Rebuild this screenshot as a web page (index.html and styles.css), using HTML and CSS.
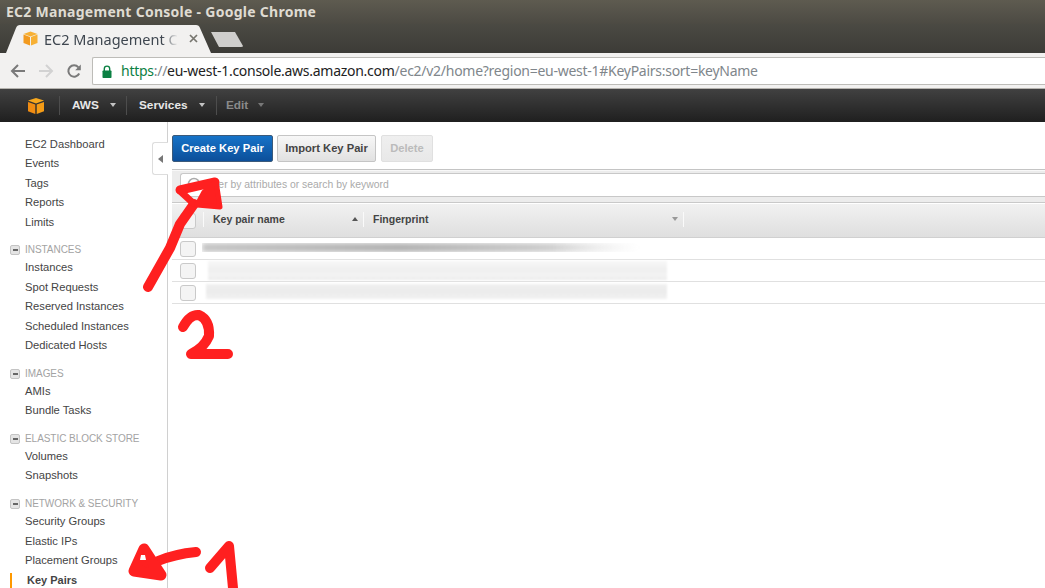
FILE: index.html
```html
<!DOCTYPE html>
<html lang="en">
<head>
<meta charset="utf-8">
<title>EC2 Management Console - Google Chrome</title>
<link rel="stylesheet" href="styles.css">
</head>
<body>
<div class="page">
  <header class="titlebar">EC2 Management Console - Google Chrome</header>
  <div class="tabstrip">
    <svg class="tabshape" width="250" height="29" viewBox="0 0 250 29"><path d="M6 29 L16 4 Q17 1 20 1 L196 1 Q199 1 200 4 L211 29 Z" fill="#f2f1f0"/><path d="M211 8 L235 8 L243 22 Q243 23 241 23 L219 23 Z" fill="#cfcecc"/></svg>
    <svg class="favicon" width="15" height="15" viewBox="0 0 15 15"><path d="M7.5 0.5 L14.5 3 L7.5 5.5 L0.5 3 Z" fill="#f7b034"/><path d="M0.5 3.5 L7 6 V14.5 L0.5 12 Z" fill="#f29a1f"/><path d="M14.5 3.5 L8 6 V14.5 L14.5 12 Z" fill="#f7b034"/></svg>
    <span class="tabtitle">EC2 Management C</span>
    <svg class="tabclose" width="9" height="9" viewBox="0 0 9 9"><path d="M1 1 L8 8 M8 1 L1 8" stroke="#77766f" stroke-width="1.7"/></svg>
  </div>
  <div class="toolbar">
    <svg class="tool" width="16" height="16" viewBox="0 0 16 16"><path d="M15 8 H2 M8 2 L2 8 L8 14" fill="none" stroke="#7a7a7a" stroke-width="2"/></svg>
    <svg class="tool" width="16" height="16" viewBox="0 0 16 16"><path d="M1 8 H14 M8 2 L14 8 L8 14" fill="none" stroke="#d2d2d2" stroke-width="2"/></svg>
    <svg class="tool" width="16" height="16" viewBox="0 0 16 16"><path d="M13.2 10.5 A5.7 5.7 0 1 1 12.4 4.3" fill="none" stroke="#7a7a7a" stroke-width="2"/><path d="M14.8 1.5 V7.2 H9.2 Z" fill="#7a7a7a"/></svg>
    <div class="omnibox">
      <svg class="lock" width="10" height="13" viewBox="0 0 10 13"><path d="M2.3 6 V3.8 A2.7 2.7 0 0 1 7.7 3.8 V6" fill="none" stroke="#0b8043" stroke-width="1.4"/><rect x="0.5" y="5.5" width="9" height="7.5" rx="0.8" fill="#0b8043"/></svg>
      <span class="url"><span class="scheme">https</span><span class="urlgrey">://</span><span class="host">eu-west-1.console.aws.amazon.com</span><span class="urlgrey">/ec2/v2/home?region=eu-west-1#KeyPairs:sort=keyName</span></span>
    </div>
  </div>
  <nav class="awsnav">
    <svg class="cube" width="18" height="18" viewBox="0 0 18 18"><path d="M9 1 L17 3.6 L9 6.4 L1 3.6 Z" fill="#f7a81e"/><path d="M1 5 L8.3 7.6 V17 L1 14.2 Z" fill="#f08c12"/><path d="M17 5 L9.7 7.6 V17 L17 14.2 Z" fill="#f59c16"/></svg>
    <div class="navitem aws">AWS<i class="caret"></i></div>
    <div class="navitem services">Services<i class="caret"></i></div>
    <div class="navitem edit">Edit<i class="caret"></i></div>
  </nav>
  <div class="content">
    <aside class="sidebar">
      <ul class="menu first">
        <li>EC2 Dashboard</li><li>Events</li><li>Tags</li><li>Reports</li><li>Limits</li>
      </ul>
      <h3 class="group"><i class="minus"></i>INSTANCES</h3>
      <ul class="menu">
        <li>Instances</li><li>Spot Requests</li><li>Reserved Instances</li><li>Scheduled Instances</li><li>Dedicated Hosts</li>
      </ul>
      <h3 class="group"><i class="minus"></i>IMAGES</h3>
      <ul class="menu">
        <li>AMIs</li><li>Bundle Tasks</li>
      </ul>
      <h3 class="group"><i class="minus"></i>ELASTIC BLOCK STORE</h3>
      <ul class="menu">
        <li>Volumes</li><li>Snapshots</li>
      </ul>
      <h3 class="group"><i class="minus"></i>NETWORK &amp; SECURITY</h3>
      <ul class="menu">
        <li>Security Groups</li><li>Elastic IPs</li><li>Placement Groups</li><li class="active">Key Pairs</li>
      </ul>
    </aside>
    <main class="main">
      <div class="collapse"><i class="leftarrow"></i></div>
      <div class="actions">
        <button class="btn primary">Create Key Pair</button>
        <button class="btn import">Import Key Pair</button>
        <button class="btn disabled">Delete</button>
      </div>
      <div class="filterbar">
        <div class="filter">
          <svg class="search" width="14" height="14" viewBox="0 0 14 14"><circle cx="7" cy="7" r="5.5" fill="none" stroke="#aaa" stroke-width="1.5"/></svg>
          <span>Filter by attributes or search by keyword</span>
        </div>
      </div>
      <div class="thead">
        <span class="chk"></span>
        <div class="th name"><span>Key pair name</span><i class="asc"></i></div>
        <div class="th print"><span>Fingerprint</span><i class="desc"></i></div>
      </div>
      <div class="row"><span class="chk"></span><div class="smear one"></div></div>
      <div class="row"><span class="chk"></span><div class="smear two"></div></div>
      <div class="row"><span class="chk"></span><div class="smear three"></div></div>
    </main>
  </div>
  <svg class="marks" width="1045" height="588" viewBox="0 0 1045 588">
    <g fill="none" stroke="#ff2020" stroke-linecap="round" stroke-linejoin="round">
      <path stroke-width="10" d="M148 287 L170 248 L180 224 L194 204"/>
      <path stroke-width="9" d="M180 190 L215 182"/>
      <path stroke-width="7" d="M180 191 L193 203"/>
      <path stroke-width="5" fill="#ff2020" d="M204 192 L216 181 L220 207 L197 205 Z"/>
      <path stroke-width="10" d="M183 327 Q190 314 199 315 Q210 320 209 336 Q204 348 191 354 L228 354"/>
      <path stroke-width="10" d="M210 568 L229 546 L233 588"/>
      <path stroke-width="10" d="M196 552 Q175 554 158 561"/>
      <path stroke-width="11" fill="#ff2020" d="M144 549 L134 571 L161 575 Z"/>
    </g>
    <path d="M141 555 L145 555 L146 560 L140 560 Z" fill="#fff"/>
  </svg>
</div>
</body>
</html>
```

FILE: styles.css
```css
* { box-sizing: border-box; }
html, body { margin: 0; padding: 0; }
body { width: 1045px; height: 588px; overflow: hidden; background: #fff; font-family: "Liberation Sans", Arial, sans-serif; }
.page { position: relative; width: 1045px; height: 588px; overflow: hidden; display: flex; flex-direction: column; }

.titlebar { height: 24px; padding: 4px 0 0 6px; background: linear-gradient(#5e5b50, #4c4a43); color: #dfdbd2; font: 700 14px/16px "Noto Sans", sans-serif; letter-spacing: 0.27px; white-space: nowrap; flex: none; }

.tabstrip { position: relative; height: 29px; background: linear-gradient(#4b4a43, #3c3b37); display: flex; align-items: center; padding-left: 23px; flex: none; }
.tabshape { position: absolute; left: 0; top: 0; }
.favicon { position: relative; flex: none; }
.tabtitle { position: relative; width: 134px; margin-left: 6px; overflow: hidden; white-space: nowrap; color: #3f4750; font: 14.5px/20px "Noto Sans", sans-serif; -webkit-mask-image: linear-gradient(90deg, #000 88%, transparent); mask-image: linear-gradient(90deg, #000 88%, transparent); }
.tabclose { position: relative; margin-left: 11px; flex: none; }

.toolbar { height: 36px; flex: none; background: #f2f1f0; display: flex; align-items: flex-start; padding: 4px 0 0 10px; border-bottom: 1px solid #b5b3ae; }
.tool { flex: none; margin: 6px 12px 0 0; }
.omnibox { flex: 1; height: 28px; margin-left: -2px; background: #fff; border: 1px solid #bdbcb8; border-right: 0; border-radius: 2px 0 0 2px; display: flex; align-items: center; padding: 0 0 0 9px; }
.lock { flex: none; }
.url { margin-left: 9px; font: 14px/20px "Noto Sans", sans-serif; letter-spacing: -0.27px; white-space: nowrap; color: #222; }
.scheme { color: #0b8043; }
.urlgrey { color: #80868b; }
.host { color: #222; }

.awsnav { height: 33px; flex: none; background: linear-gradient(#414141, #1f1f1f); display: flex; align-items: center; padding: 0 0 1px 27px; color: #e8e8e8; font-size: 11.8px; font-weight: 700; }
.cube { flex: none; margin: 1px 14px 0 0; }
.navitem { height: 19px; border-left: 1px solid #4d4d4d; display: flex; align-items: center; white-space: nowrap; }
.aws { padding-left: 12px; width: 67px; }
.services { padding-left: 12px; width: 90px; }
.edit { padding-left: 9px; color: #8a8a8a; }
.caret { width: 0; height: 0; border: 3.5px solid transparent; border-top: 4px solid currentColor; border-bottom: 0; margin-left: 11px; opacity: .8; }
.edit .caret { margin-left: 10px; }

.content { flex: 1; min-height: 0; display: flex; }
.sidebar { width: 168px; flex: none; border-right: 1px solid #d0d0d0; padding: 12.5px 0 0 10px; color: #444; font-size: 11.2px; line-height: 19.5px; }
.menu { list-style: none; margin: 0; padding: 0 0 0 15px; white-space: nowrap; }
.group { margin: 8.15px 0 0; padding: 2px 0 0; font-weight: 400; font-size: 10px; letter-spacing: -0.05px; line-height: 16px; color: #a3a3a3; display: flex; align-items: center; white-space: nowrap; height: 18px; }
.minus { position: relative; width: 10px; height: 10px; margin-right: 5px; background: #e4e4e4; border: 1px solid #c4c4c4; border-radius: 2px; flex: none; }
.minus::after { content: ""; position: absolute; left: 1.5px; top: 3px; width: 5px; height: 2px; background: #666; }
.active { position: relative; left: 2px; font-weight: 700; font-size: 11px; color: #444; }
.active::before { content: ""; position: absolute; left: -17px; top: 2px; bottom: 0; width: 2px; background: #f90; }

.main { position: relative; flex: 1; min-width: 0; padding: 13px 0 0 4px; }
.collapse { position: absolute; left: -16px; top: 20px; width: 16px; height: 33px; background: #fff; border: 1px solid #ddd; border-right: 0; border-radius: 3px 0 0 3px; display: flex; align-items: center; justify-content: center; }
.leftarrow { width: 0; height: 0; border: 4px solid transparent; border-right: 5px solid #777; border-left: 0; }

.actions { display: flex; gap: 4px; height: 27px; }
.btn { height: 27px; padding: 0; font: 700 11.2px/1 "Liberation Sans", Arial, sans-serif; border: 1px solid #c5c5c5; border-radius: 2px; color: #444; background: linear-gradient(#f7f7f7, #e1e1e1); }
.primary { width: 101px; color: #fff; background: linear-gradient(#1673c8, #0c4f9a); border-color: #3b5a7a; }
.import { width: 99px; }
.disabled { width: 52px; margin-left: 1px; color: #bbb; background: linear-gradient(#efefef, #e8e8e8); border-color: #e0e0e0; }

.filterbar { margin-top: 7px; height: 34px; padding: 3px 0 0 8px; background: #ececec; border-top: 1px solid #c4c4c4; border-bottom: 1px solid #c9c9c9; box-shadow: inset 0 1px 0 #f8f8f8; }
.filter { height: 24px; background: #fff; border: 1px solid #c8c8c8; border-right: 0; border-radius: 3px 0 0 3px; display: flex; align-items: center; padding: 0 0 2px 6px; gap: 3.5px; color: #aaa; font-size: 10.4px; }

.thead { height: 35px; display: flex; align-items: center; background: linear-gradient(#f1f1f1, #dfdfdf); border-top: 1px solid #fff; border-bottom: 1px solid #d0d0d0; padding-left: 8px; color: #444; font-size: 10.5px; font-weight: 700; }
.th { height: 15px; margin-bottom: 3px; border-left: 1px solid #fafafa; display: flex; align-items: center; justify-content: space-between; white-space: nowrap; }
.name { width: 159.5px; margin-left: 7px; padding: 0 5px 0 9px; }
.print { width: 321.5px; padding: 0 5px 0 9.5px; border-right: 1px solid #fafafa; }
.asc { width: 0; height: 0; border: 3px solid transparent; border-bottom: 4px solid #555; border-top: 0; }
.desc { width: 0; height: 0; border: 3.5px solid transparent; border-top: 4px solid #999; border-bottom: 0; }
.chk { width: 16px; height: 16px; flex: none; background: #f4f4f4; border: 1px solid #c9c9c9; border-radius: 3px; }

.row { position: relative; height: 22px; display: flex; align-items: center; padding-left: 8px; border-bottom: 1px solid #e0e0e0; }
.smear { position: absolute; }
.one { left: 30px; top: 5px; width: 438px; height: 9px; background: linear-gradient(90deg, #c4c4c4, #b0b0b0 45%, #c8c8c8 75%, #e8e8e8); filter: blur(2.5px); -webkit-mask-image: linear-gradient(90deg, #000 80%, transparent); mask-image: linear-gradient(90deg, #000 80%, transparent); }
.two { left: 36px; top: 1px; width: 459px; height: 19px; background: linear-gradient(#f7f7f7, #efefef 50%, #f4f4f4 70%, #ececec); filter: blur(1px); }
.three { left: 34px; top: 2px; width: 461px; height: 15px; background: linear-gradient(#f0f0f0, #ebebeb 50%, #f2f2f2); filter: blur(1px); }

.marks { position: absolute; left: 0; top: 0; pointer-events: none; }
```
